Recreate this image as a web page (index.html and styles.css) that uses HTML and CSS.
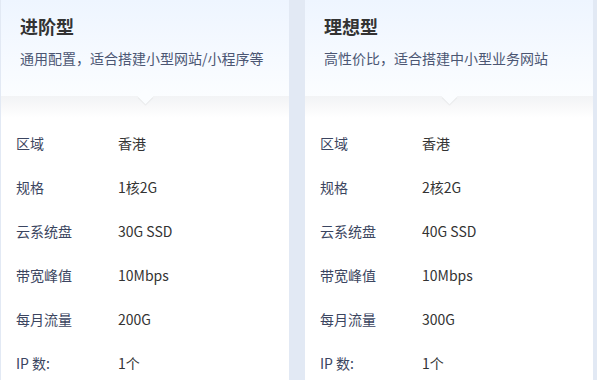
FILE: index.html
```html
<!DOCTYPE html>
<html lang="zh-CN">
<head>
<meta charset="utf-8">
<link rel="stylesheet" href="styles.css">
</head>
<body>
<div class="plans">
  <section class="card">
    <header class="card-head">
      <h2 class="title">进阶型</h2>
      <p class="desc">通用配置，适合搭建小型网站/小程序等</p>
      <span class="arrow"></span>
    </header>
    <dl class="specs">
      <div class="row"><dt>区域</dt><dd>香港</dd></div>
      <div class="row"><dt>规格</dt><dd>1核2G</dd></div>
      <div class="row"><dt>云系统盘</dt><dd>30G SSD</dd></div>
      <div class="row"><dt>带宽峰值</dt><dd>10Mbps</dd></div>
      <div class="row"><dt>每月流量</dt><dd>200G</dd></div>
      <div class="row"><dt>IP 数:</dt><dd>1个</dd></div>
    </dl>
  </section>
  <section class="card">
    <header class="card-head">
      <h2 class="title">理想型</h2>
      <p class="desc">高性价比，适合搭建中小型业务网站</p>
      <span class="arrow"></span>
    </header>
    <dl class="specs">
      <div class="row"><dt>区域</dt><dd>香港</dd></div>
      <div class="row"><dt>规格</dt><dd>2核2G</dd></div>
      <div class="row"><dt>云系统盘</dt><dd>40G SSD</dd></div>
      <div class="row"><dt>带宽峰值</dt><dd>10Mbps</dd></div>
      <div class="row"><dt>每月流量</dt><dd>300G</dd></div>
      <div class="row"><dt>IP 数:</dt><dd>1个</dd></div>
    </dl>
  </section>
</div>
</body>
</html>
```
FILE: styles.css
```css
* { box-sizing: border-box; }
html, body { margin: 0; padding: 0; }
body {
  background: #e2e9f4;
  font-family: "Noto Sans CJK SC", "Noto Sans", sans-serif;
  width: 597px;
  height: 380px;
  overflow: hidden;
}
.plans {
  display: flex;
  gap: 16px;
  padding-left: 1px;
  height: 380px;
  overflow: hidden;
}
.card {
  width: 288px;
  flex: 0 0 288px;
  background: linear-gradient(to bottom, #f2f3f5 96px, #ffffff 118px);
}
.card-head {
  position: relative;
  height: 96px;
  padding: 13px 0 0 19px;
  background: linear-gradient(to bottom, #eef5ff, #fbfdff);
}
.title {
  margin: 0;
  font-size: 18px;
  line-height: 26px;
  font-weight: 700;
  color: #333;
}
.desc {
  margin: 9px 0 0;
  font-size: 14px;
  line-height: 20px;
  color: #4b5673;
}
.arrow {
  position: absolute;
  left: 50%;
  bottom: -6px;
  width: 11px;
  height: 11px;
  margin-left: -5.5px;
  background: #fbfdff;
  transform: rotate(45deg);
  box-shadow: 1px 1px 1px rgba(0, 0, 0, 0.05);
}
.specs {
  margin: 0;
  padding: 25px 0 0 15px;
}
.row {
  display: flex;
  height: 44px;
  align-items: center;
  font-size: 14px;
}
.row dt {
  width: 102px;
  color: #3b4560;
}
.row dd {
  margin: 0;
  color: #333;
}
```
